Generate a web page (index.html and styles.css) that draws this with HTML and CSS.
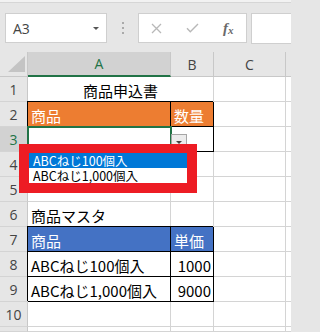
FILE: index.html
```html
<!DOCTYPE html>
<html lang="ja">
<head>
<meta charset="utf-8">
<title>商品申込書</title>
<link rel="stylesheet" href="styles.css">
</head>
<body>
<div class="topline"></div>
<div class="fbar">
  <div class="namebox">
    <span class="ref">A3</span>
    <svg class="nb-arrow" width="6" height="3" viewBox="0 0 6 3"><path d="M0 0h6L3 3z" fill="#555"/></svg>
  </div>
  <div class="grip"><i></i><i></i><i></i></div>
  <div class="fbtns">
    <svg width="11" height="11" viewBox="0 0 11 11"><path d="M1 1L10 10M10 1L1 10" stroke="#b8b8b8" stroke-width="1.3" fill="none"/></svg>
    <svg width="13" height="10" viewBox="0 0 13 10"><path d="M1 5.2L4.3 8.8L12 1" stroke="#b8b8b8" stroke-width="1.4" fill="none"/></svg>
    <span class="fx"><i>f</i><sub>x</sub></span>
  </div>
  <div class="finput"></div>
</div>
<div class="sheet">
  <div class="ch corner"><svg width="17" height="16" viewBox="0 0 17 16"><path d="M17 0V16H0z" fill="#c4c4c4"/></svg></div>
  <div class="ch sel">A</div>
  <div class="ch">B</div>
  <div class="ch">C</div>
  <div class="ch"></div>

  <div class="rh">1</div>
  <div class="c merge">商品申込書</div>
  <div class="c"></div>
  <div class="c"></div>

  <div class="rh">2</div>
  <div class="c b orange">商品</div>
  <div class="c b orange">数量</div>
  <div class="c"></div>
  <div class="c"></div>

  <div class="rh sel">3</div>
  <div class="c b a3">
    <div class="ddbtn"><svg width="6" height="3" viewBox="0 0 6 3"><path d="M0 0h6L3 3z" fill="#444"/></svg></div>
    <div class="list">
      <div class="item hl">ABCねじ100個入</div>
      <div class="item">ABCねじ1,000個入</div>
    </div>
  </div>
  <div class="c b"></div>
  <div class="c"></div>
  <div class="c"></div>

  <div class="rh">4</div>
  <div class="c"></div><div class="c"></div><div class="c"></div><div class="c"></div>

  <div class="rh">5</div>
  <div class="c"></div><div class="c"></div><div class="c"></div><div class="c"></div>

  <div class="rh">6</div>
  <div class="c">商品マスタ</div><div class="c"></div><div class="c"></div><div class="c"></div>

  <div class="rh">7</div>
  <div class="c b blue">商品</div>
  <div class="c b blue">単価</div>
  <div class="c"></div><div class="c"></div>

  <div class="rh">8</div>
  <div class="c b">ABCねじ100個入</div>
  <div class="c b num">1000</div>
  <div class="c"></div><div class="c"></div>

  <div class="rh">9</div>
  <div class="c b">ABCねじ1,000個入</div>
  <div class="c b num">9000</div>
  <div class="c"></div><div class="c"></div>

  <div class="rh">10</div>
  <div class="c"></div><div class="c"></div><div class="c"></div><div class="c"></div>

  <div class="rh"></div>
  <div class="c"></div><div class="c"></div><div class="c"></div><div class="c"></div>
</div>
</body>
</html>
```

FILE: styles.css
```css
* { box-sizing: border-box; margin: 0; padding: 0; }
html, body { width: 291px; height: 332px; overflow: hidden; }
body {
  background: #e6e6e6;
  font-family: "Noto Sans CJK JP", "Noto Sans", sans-serif;
}

.topline { height: 3px; background: #f2f2f2; border-bottom: 1px solid #d6d6d6; }

.fbar {
  display: flex;
  align-items: flex-start;
  height: 49px;
  padding: 10px 0 0 5px;
}
.namebox {
  width: 102px; height: 30px;
  background: #fff; border: 1px solid #cfcfcf;
  display: flex; align-items: center; justify-content: space-between;
  padding: 0 7px;
}
.ref { font-family: "Open Sans", "Noto Sans", sans-serif; font-size: 14px; color: #444; }
.grip {
  width: 31px; height: 30px;
  display: flex; flex-direction: column; align-items: center; justify-content: center; gap: 3px;
}
.grip i { display: block; width: 2px; height: 2px; background: #aaa; }
.fbtns {
  width: 109px; height: 30px;
  background: #fff; border: 1px solid #cfcfcf;
  display: grid; grid-template-columns: repeat(3, 1fr);
  align-items: center; justify-items: center;
}
.fx { font-family: "Liberation Serif", serif; font-style: italic; font-weight: bold; font-size: 15px; color: #6a6a6a; line-height: 1; }
.fx sub { font-size: 11px; vertical-align: -1px; }
.finput {
  flex: 1; height: 31px; margin-left: 4px;
  background: #fff; border: 1px solid #cfcfcf; border-right: none;
}

.sheet {
  display: grid;
  grid-template-columns: 28px 143px 43px 72px 20px;
  grid-template-rows: repeat(11, 25px) 5px;
  background: #fff;
}
.ch {
  background: #e6e6e6;
  border-right: 1px solid #c8c8c8;
  border-bottom: 1px solid #c8c8c8;
  display: flex; align-items: center; justify-content: center;
  font-family: "Open Sans", "Noto Sans", sans-serif; font-size: 14px; color: #444;
}
.ch.sel { background: #d2d2d2; color: #217346; border-bottom: 2px solid #217346; }
.corner { align-items: flex-end; justify-content: flex-end; padding: 0 2px 4px 0; }

.rh {
  background: #e6e6e6;
  border-right: 1px solid #c8c8c8;
  border-bottom: 1px solid #d4d4d4;
  display: flex; align-items: center; justify-content: center;
  font-family: "Open Sans", "Noto Sans", sans-serif; font-size: 14px; color: #444;
}
.rh.sel { background: #d2d2d2; color: #217346; }

.c {
  border-right: 1px solid #d4d4d4;
  border-bottom: 1px solid #d4d4d4;
  display: flex; align-items: center;
  padding: 2px 3px 0;
  font-size: 15px; color: #000;
  white-space: nowrap;
}
.merge { grid-column: span 2; justify-content: center; }
.b { border-right-color: #000; border-bottom-color: #000; box-shadow: -1px -1px 0 #000; }
.orange { background: #ed7d31; color: #fff; }
.blue { background: #4472c4; color: #fff; }
.num { justify-content: flex-end; padding-right: 2px; }

.a3 { position: relative; z-index: 1; outline: 2px solid #217346; outline-offset: -1px; }
.ddbtn {
  position: absolute; left: calc(100% + 1px); top: 7px;
  width: 16px; height: 16px;
  background: #ececec; border: 1px solid #a6a6a6;
  display: flex; align-items: center; justify-content: center;
}
.list {
  position: absolute; left: -9px; top: 17px;
  width: 178px;
  border: solid #ed1c24; border-width: 9px 10px 10px;
  background: #fff;
  font-size: 12.5px;
}
.item { height: 15px; line-height: 15px; padding-left: 4px; color: #000; }
.item.hl { background: #0078d7; color: #fff; }
```
